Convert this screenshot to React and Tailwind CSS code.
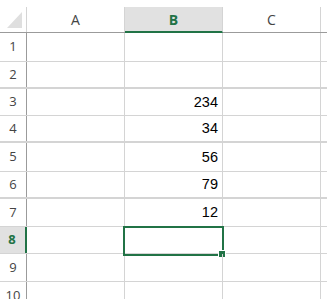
import React from 'react'

const GREEN = '#217346'

// row heights include the bottom grid line
const ROWS = [
  { n: 1, h: 'h-[29px]', v: '' },
  { n: 2, h: 'h-[27px]', v: '', thick: true },
  { n: 3, h: 'h-[27px]', v: '234' },
  { n: 4, h: 'h-[27px]', v: '34', thick: true },
  { n: 5, h: 'h-[29px]', v: '56' },
  { n: 6, h: 'h-[27px]', v: '79', thick: true },
  { n: 7, h: 'h-[28px]', v: '12' },
  { n: 8, h: 'h-[27px]', v: '', active: true },
  { n: 9, h: 'h-[28px]', v: '' },
  { n: 10, h: 'h-[28px]', v: '' },
]

function Corner() {
  return (
    <div className="w-[27px] shrink-0 border-r border-[#d4d4d4] flex items-end justify-end pr-[4px] pb-[4px]">
      <svg width="15" height="16" viewBox="0 0 15 16">
        <polygon points="0,16 15,0 15,16" fill="#dfdfdf" />
      </svg>
    </div>
  )
}

function Row({ row }) {
  const line = row.thick ? 'border-b-2' : 'border-b'
  return (
    <div className={`flex ${row.h} ${line} border-[#d4d4d4]`}>
      {row.active ? (
        <div className="w-[27px] shrink-0 bg-[#e1e1e1] border-r-2 border-[#217346] flex items-center justify-center text-[13px] font-bold text-[#217346] pr-[1px]">
          {row.n}
        </div>
      ) : (
        <div className="w-[27px] shrink-0 border-r border-[#9b9b9b] flex items-center justify-center text-[13px] text-[#444]">
          {row.n}
        </div>
      )}
      <div className="w-[98px] shrink-0 border-r border-[#d4d4d4]" />
      <div className="relative w-[98px] shrink-0 border-r border-[#d4d4d4] flex items-center justify-end pr-[4px] pt-[1px] text-[14.5px] text-black font-['Liberation_Sans',Arial,sans-serif]">
        {row.v}
        {row.active && (
          <div className="absolute -left-[2px] -top-[1px] w-[101px] h-[30px] border-2 border-[#217346]">
            <div className="absolute -right-[4px] -bottom-[4px] w-[8px] h-[8px] bg-[#217346] border border-white" />
          </div>
        )}
      </div>
      <div className="w-[98px] shrink-0 border-r border-[#d4d4d4]" />
    </div>
  )
}

export default function App() {
  return (
    <div className="w-[327px] h-[299px] bg-white overflow-hidden font-['Open_Sans','Noto_Sans',sans-serif] select-none">
      <div className="h-[7px]" />
      <div className="flex h-[26px] border-b border-[#9b9b9b] text-[14px] text-[#444]">
        <Corner />
        <div className="w-[98px] shrink-0 border-r border-[#d4d4d4] flex items-center justify-center">A</div>
        <div className="w-[98px] shrink-0 -mb-px h-[26px] bg-[#e1e1e1] border-r border-[#d4d4d4] border-b-2 border-b-[#217346] flex items-center justify-center font-bold text-[#217346]">
          B
        </div>
        <div className="w-[98px] shrink-0 border-r border-[#d4d4d4] flex items-center justify-center">C</div>
      </div>
      {ROWS.map((r) => (
        <Row key={r.n} row={r} />
      ))}
    </div>
  )
}
